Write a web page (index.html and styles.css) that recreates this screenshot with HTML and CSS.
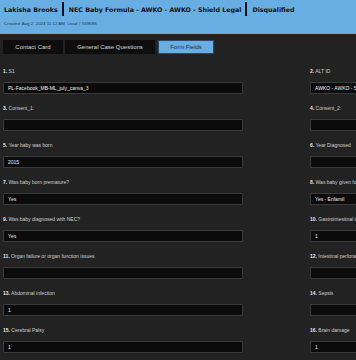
FILE: index.html
```html
<!DOCTYPE html>
<html>
<head>
<meta charset="utf-8">
<link rel="stylesheet" href="styles.css">
</head>
<body>
<header class="hdr">
  <div class="title">
    <span>Lakisha Brooks</span><span class="sep"></span><span>NEC Baby Formula - AWKO - AWKO - Shield Legal</span><span class="sep"></span><span>Disqualified</span>
  </div>
  <div class="meta">Created: Aug 2, 2024 11:12 AM&nbsp;&nbsp;Lead # 569688</div>
</header>
<nav class="tabs">
  <div class="tab tab-a">Contact Card</div>
  <div class="tab tab-b">General Case Questions</div>
  <div class="tab tab-c active">Form Fields</div>
</nav>
<main class="grid">
  <div class="field"><div class="lbl"><b>1.</b> S1</div><div class="inp">PL-Facebook_MB-ML_july_canva_3</div></div>
  <div class="field"><div class="lbl"><b>2.</b> ALT ID</div><div class="inp">AWKO - AWKO - 569688</div></div>
  <div class="field"><div class="lbl"><b>3.</b> Consent_1:</div><div class="inp"></div></div>
  <div class="field"><div class="lbl"><b>4.</b> Consent_2:</div><div class="inp"></div></div>
  <div class="field"><div class="lbl"><b>5.</b> Year baby was born</div><div class="inp">2015</div></div>
  <div class="field"><div class="lbl"><b>6.</b> Year Diagnosed</div><div class="inp"></div></div>
  <div class="field"><div class="lbl"><b>7.</b> Was baby born premature?</div><div class="inp">Yes</div></div>
  <div class="field"><div class="lbl"><b>8.</b> Was baby given formula?</div><div class="inp">Yes - Enfamil</div></div>
  <div class="field"><div class="lbl"><b>9.</b> Was baby diagnosed with NEC?</div><div class="inp">Yes</div></div>
  <div class="field"><div class="lbl"><b>10.</b> Gastrointestinal issues</div><div class="inp">1</div></div>
  <div class="field"><div class="lbl"><b>11.</b> Organ failure or organ function issues</div><div class="inp"></div></div>
  <div class="field"><div class="lbl"><b>12.</b> Intestinal perforation</div><div class="inp"></div></div>
  <div class="field"><div class="lbl"><b>13.</b> Abdominal infection</div><div class="inp">1</div></div>
  <div class="field"><div class="lbl"><b>14.</b> Sepsis</div><div class="inp"></div></div>
  <div class="field"><div class="lbl"><b>15.</b> Cerebral Palsy</div><div class="inp">1</div></div>
  <div class="field"><div class="lbl"><b>16.</b> Brain damage</div><div class="inp">1</div></div>
</main>
</body>
</html>
```
FILE: styles.css
```css
html, body {
  margin: 0;
  padding: 0;
  background: #222222;
  overflow: hidden;
}
body {
  width: 356px;
  height: 360px;
  font-family: "Liberation Sans", Arial, sans-serif;
}
.hdr {
  background: #68aee3;
  height: 34px;
  box-sizing: border-box;
  padding: 2px 0 0 4px;
}
.title {
  display: flex;
  align-items: center;
  font-family: "DejaVu Sans", Verdana, sans-serif;
  font-weight: bold;
  font-size: 6.3px;
  color: #111;
  height: 14px;
  white-space: nowrap;
}
.sep {
  display: inline-block;
  width: 2px;
  height: 14px;
  background: #111;
  margin: 0 5px 0 4px;
}
.meta {
  font-size: 4.4px;
  color: #1c3a55;
  margin-top: 5px;
}
.tabs {
  display: flex;
  gap: 2px;
  padding: 6px 3px 6px 3px;
  background: #222;
}
.tab {
  height: 14px;
  box-sizing: border-box;
  background: #0e0e0e;
  color: #d8d8d8;
  font-size: 6px;
  display: flex;
  align-items: center;
  justify-content: center;
}
.tab-a { width: 60px; }
.tab-b { width: 90px; }
.tab-c { width: 56px; margin-left: 1px; }
.tab.active {
  background: #68aee3;
  color: #1f2f3d;
  border: 1px solid #2b4a66;
}
.grid {
  display: grid;
  grid-template-columns: 240px 240px;
  column-gap: 67px;
  padding: 8px 0 0 3px;
  width: 600px;
}
.field {
  height: 37px;
}
.lbl {
  font-size: 5px;
  line-height: 6px;
  color: #cfcfcf;
  margin-bottom: 8px;
  white-space: nowrap;
}
.lbl b { color: #e8e8e8; }
.inp {
  height: 12px;
  box-sizing: border-box;
  background: #0b0b0b;
  border: 1px solid #3a3a3a;
  border-radius: 1px;
  color: #eee;
  font-size: 5px;
  line-height: 10px;
  padding-left: 4px;
  white-space: nowrap;
  overflow: hidden;
}
```
